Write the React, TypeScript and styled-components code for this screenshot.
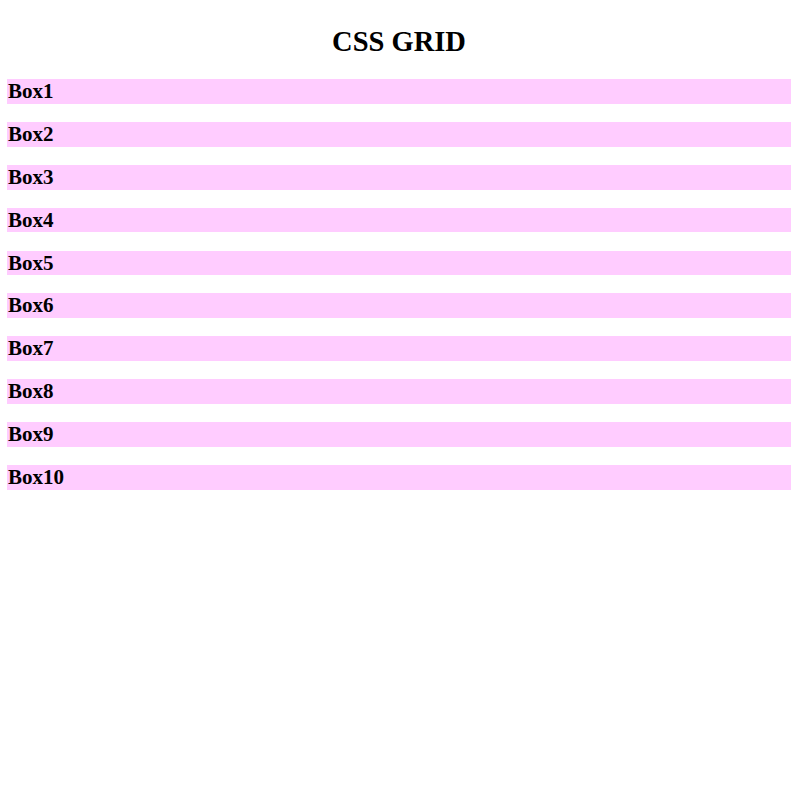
import styled, { createGlobalStyle } from 'styled-components';

const GlobalStyle = createGlobalStyle`
  body {
    margin: 0;
    background: #ffffff;
    font-family: "Liberation Serif", "Times New Roman", serif;
    color: #000000;
  }
`;

const Page = styled.div`
  padding: 0 7px;
`;

const Title = styled.h1`
  margin: 0;
  padding-top: 26px;
  font-size: 28.5px;
  line-height: 32px;
  font-weight: bold;
  text-align: center;
`;

// 박스 목록 (grid)
const Grid = styled.div`
  display: grid;
  grid-template-columns: 1fr;
  row-gap: 18.1px;
  margin-top: 21px;
`;

const Box = styled.div`
  background-color: #ffccff;
  padding: 0 1px;
  font-size: 21px;
  line-height: 24.8px;
  font-weight: bold;
`;

const boxes = Array.from({ length: 10 }, (_, i) => `Box${i + 1}`);

function App() {
  return (
    <>
      <GlobalStyle />
      <Page>
        <Title>CSS GRID</Title>
        <Grid>
          {boxes.map((name) => (
            <Box key={name}>{name}</Box>
          ))}
        </Grid>
      </Page>
    </>
  );
}

export default App;
